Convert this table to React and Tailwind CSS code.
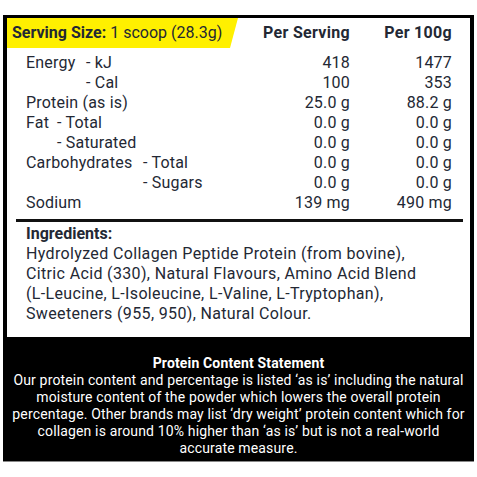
import React from 'react';

const rows = [
  { a: 'Energy', aw: 'w-[60px]', b: '- kJ', s: '418', h: '1477' },
  { a: '', aw: 'w-[60px]', b: '- Cal', s: '100', h: '353' },
  { a: 'Protein (as is)', aw: '', b: '', s: '25.0 g', h: '88.2 g' },
  { a: 'Fat', aw: 'w-[31px]', b: '- Total', s: '0.0 g', h: '0.0 g' },
  { a: '', aw: 'w-[31px]', b: '- Saturated', s: '0.0 g', h: '0.0 g' },
  { a: 'Carbohydrates', aw: 'w-[117px]', b: '- Total', s: '0.0 g', h: '0.0 g' },
  { a: '', aw: 'w-[117px]', b: '- Sugars', s: '0.0 g', h: '0.0 g' },
  { a: 'Sodium', aw: '', b: '', s: '139 mg', h: '490 mg' },
];

const NutritionPanel = () => {
  return (
    <div className="bg-white w-[477px] h-[477px] pt-[15px] pl-[3px] font-['Roboto','Liberation_Sans',sans-serif] text-[#232834]">
      <div className="w-[471px] border-t-[3px] border-x-4 border-black bg-white">
        {/* header */}
        <div className="flex items-center h-[30px]">
          <div className="w-[231px] h-full flex items-center pl-[5px] bg-[#fff000] [clip-path:polygon(0_0,100%_0,calc(100%-8px)_100%,0_100%)] text-[16px] whitespace-nowrap">
            <span className="font-bold">Serving Size:</span>
            <span className="ml-[4px]">1 scoop (28.3g)</span>
          </div>
          <div className="w-[112px] text-right font-bold text-[16px] tracking-[0.3px]">Per Serving</div>
          <div className="w-[102px] text-right font-bold text-[16px] tracking-[0.3px]">Per 100g</div>
        </div>

        {/* rows */}
        <div className="mt-[5px] pl-[19px] pr-[18px] text-[16px] leading-[20px] tracking-[0.2px]">
          {rows.map((r, i) => (
            <div key={i} className="flex h-[20px]">
              <div className="flex-1 flex whitespace-nowrap">
                {r.aw ? <span className={r.aw}>{r.a}</span> : <span>{r.a}</span>}
                {r.b && <span>{r.b}</span>}
              </div>
              <div className="w-[102px] text-right">{r.s}</div>
              <div className="w-[102px] text-right">{r.h}</div>
            </div>
          ))}
        </div>

        <div className="ml-[9px] mr-[7px] mt-[6px] h-[3px] bg-[#111]" />

        {/* ingredients */}
        <div className="pl-[19px] pt-[2px] text-[16px] leading-[20px] tracking-[0.35px] pb-[13px]">
          <div className="font-bold tracking-normal">Ingredients:</div>
          <div>Hydrolyzed Collagen Peptide Protein (from bovine),</div>
          <div>Citric Acid (330), Natural Flavours, Amino Acid Blend</div>
          <div>(L-Leucine, L-Isoleucine, L-Valine, L-Tryptophan),</div>
          <div>Sweeteners (955, 950), Natural Colour.</div>
        </div>

        {/* statement */}
        <div className="bg-black text-white text-center text-[14px] leading-[17px] tracking-[0.15px] pt-[18px] pb-[4px] border-b border-[#888] -mx-1 whitespace-nowrap">
          <div className="font-bold">Protein Content Statement</div>
          <p>
            Our protein content and percentage is listed ‘as is’ including the natural
            <br />
            moisture content of the powder which lowers the overall protein
            <br />
            percentage. Other brands may list ‘dry weight’ protein content which for
            <br />
            collagen is around 10% higher than ‘as is’ but is not a real-world
            <br />
            accurate measure.
          </p>
        </div>
      </div>
    </div>
  );
};

export default function App() {
  return <NutritionPanel />;
}
